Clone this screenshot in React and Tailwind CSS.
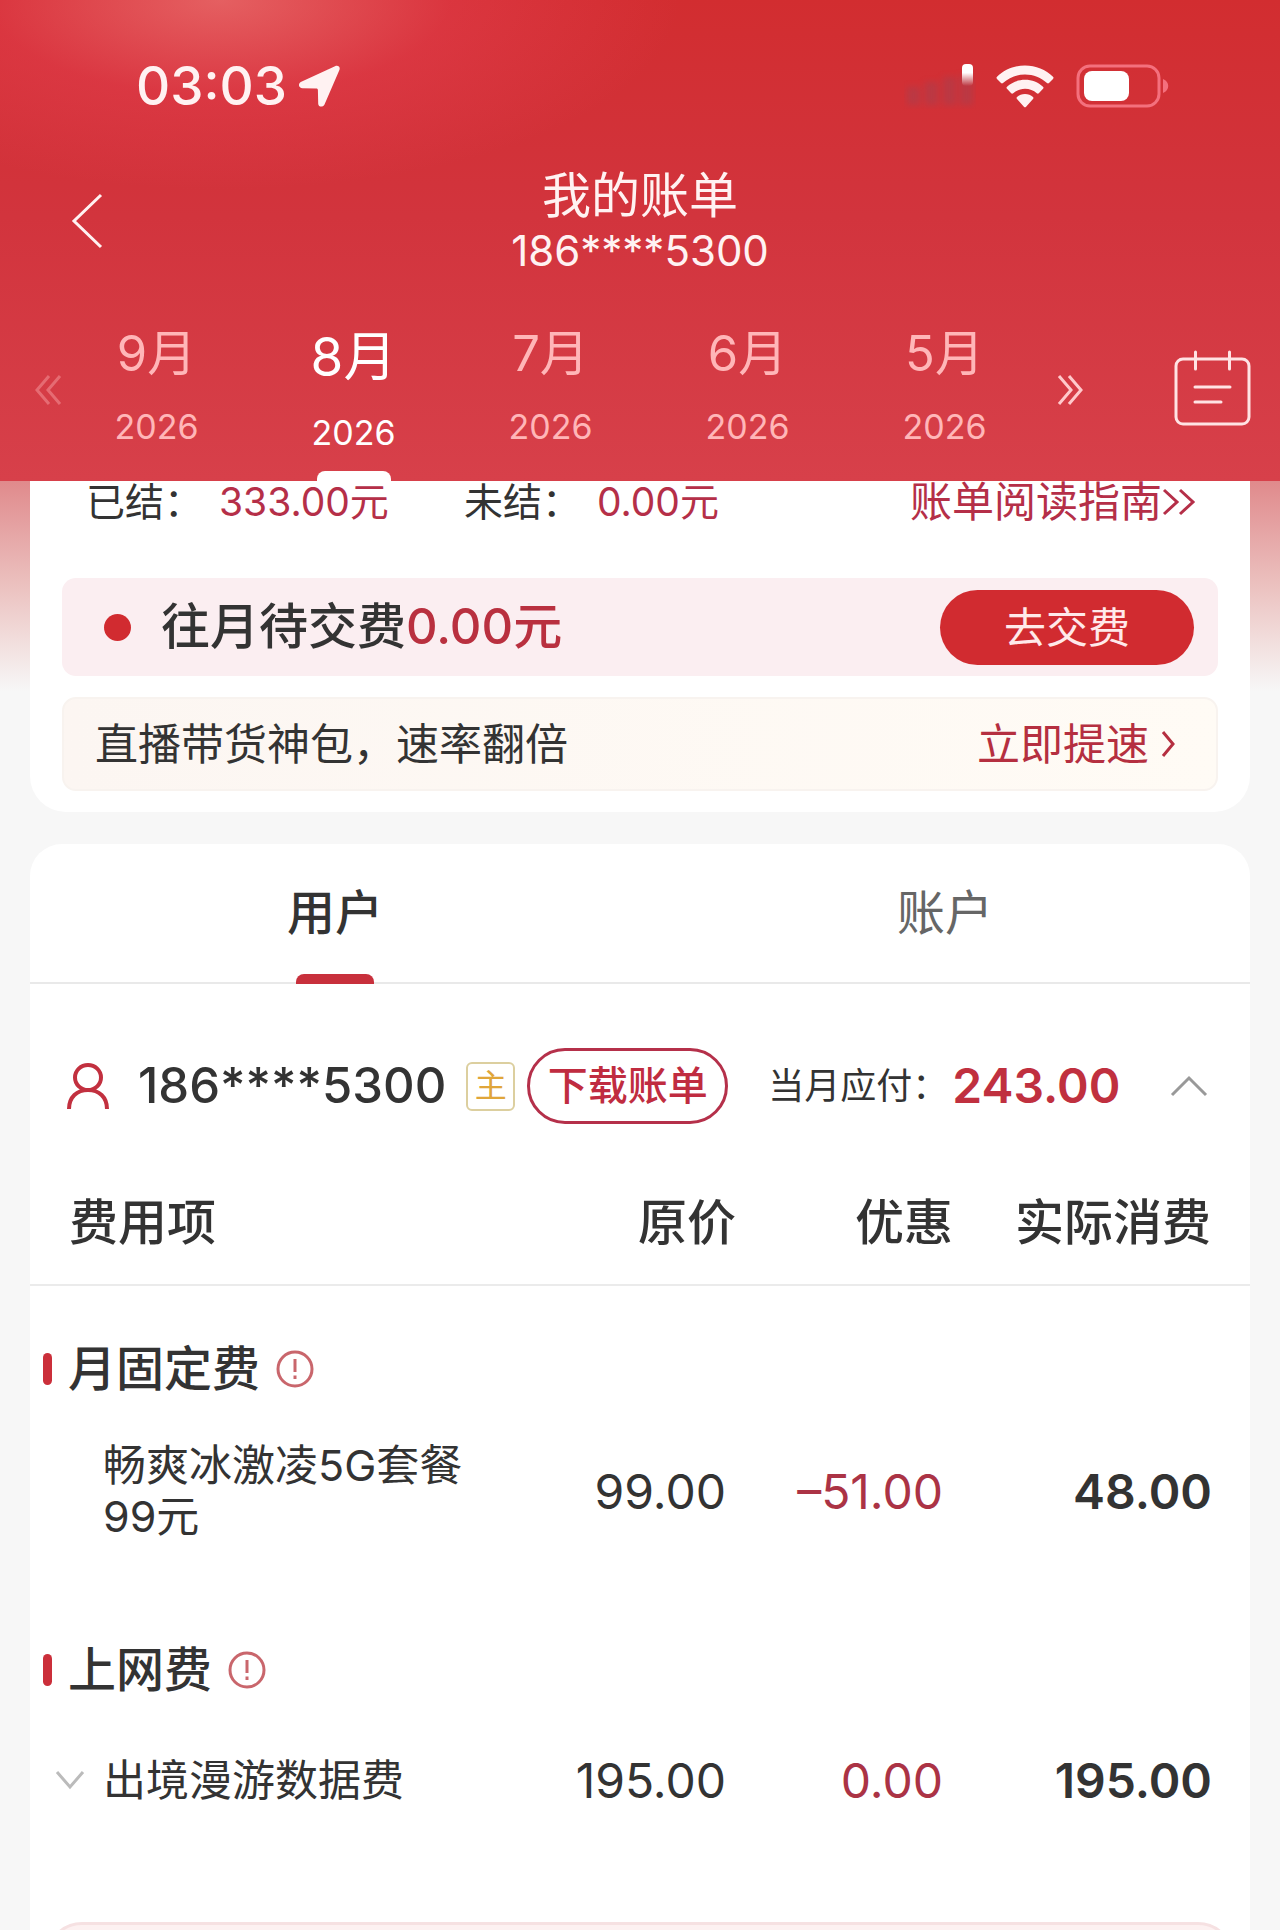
import React, { useState } from 'react'

const months = [
  { month: '9月', year: '2026' },
  { month: '8月', year: '2026' },
  { month: '7月', year: '2026' },
  { month: '6月', year: '2026' },
  { month: '5月', year: '2026' },
]

const groups = [
  {
    title: '月固定费',
    items: [{ name: '畅爽冰激凌5G套餐99元', price: '99.00', discount: '–51.00', actual: '48.00' }],
  },
  {
    title: '上网费',
    items: [{ name: '出境漫游数据费', price: '195.00', discount: '0.00', actual: '195.00', more: true }],
  },
]

function StatusBar() {
  return (
    <div className="flex items-center justify-between pt-[52px] pl-[136px] pr-[110px]">
      <div className="flex items-center gap-3">
        <span className="text-[53px] leading-[68px] font-medium">03:03</span>
        <svg className="h-[42px] w-[42px]" viewBox="0 0 42 42" fill="currentColor">
          <path d="M36 1.200c2.900-1.400 5.600.6 4.400 3.800L25.500 39.500c-1.500 3.200-6.200 2.600-6.300-.8L18.900 25c0-1-.6-1.600-1.600-1.600L3.400 23.200C-.6 23-1.300 18.300 2.300 16.700z" />
        </svg>
      </div>
      <div className="flex items-center">
        <svg className="mr-5 h-[46px] w-[72px]" viewBox="0 0 72 46">
          <defs>
            <linearGradient id="bar" x1="0" y1="0" x2="0" y2="1">
              <stop offset="0" stopColor="#fff" />
              <stop offset=".4" stopColor="#fff" />
              <stop offset="1" stopColor="#fff" stopOpacity="0" />
            </linearGradient>
            <filter id="soft" x="-20%" y="-20%" width="140%" height="140%">
              <feGaussianBlur stdDeviation="3" />
            </filter>
          </defs>
          <g fill="#a83f50" opacity=".55" filter="url(#soft)">
            <rect x="3" y="24" width="13" height="18" />
            <rect x="21" y="19" width="13" height="23" />
            <rect x="39" y="14" width="13" height="28" />
            <rect x="56" y="12" width="13" height="30" />
          </g>
          <rect x="58" y="1" width="11" height="22" rx="4" fill="url(#bar)" />
        </svg>
        <svg className="mr-[22px] h-[43px] w-[58px]" viewBox="0 0 58 43" fill="currentColor">
          <path d="M29 .5C39.800.5 49.800 4.700 57 11.800c.7.700.7 1.400 0 2.100l-4 4.200c-.6.600-1.400.6-2 0C45.200 12.600 37.500 9.400 29 9.400S12.800 12.600 7 18.100c-.6.600-1.400.6-2 0L1 13.900c-.7-.7-.7-1.400 0-2.100C8.200 4.700 18.200.5 29 .5z" />
          <path d="M29 14.800c7 0 13.300 2.600 18 7 .7.600.7 1.300 0 2l-4.200 4.400c-.6.600-1.300.6-2 0-3.200-2.800-7.300-4.500-11.800-4.500s-8.600 1.700-11.800 4.500c-.7.600-1.400.6-2 0L11 23.800c-.7-.7-.7-1.400 0-2 4.700-4.400 11-7 18-7z" />
          <path d="M29 29c3.100 0 5.900 1.200 8 3.100.6.600.6 1.200 0 1.900l-6.900 7.700c-.7.700-1.500.7-2.200 0L21 34c-.6-.7-.6-1.300 0-1.900 2.100-1.900 4.900-3.100 8-3.100z" />
        </svg>
        <svg className="h-[44px] w-[94px]" viewBox="0 0 94 44">
          <rect x="2" y="2" width="81" height="40" rx="12" fill="none" stroke="#f4707d" strokeWidth="3" />
          <rect x="8" y="7" width="45" height="30" rx="8" fill="#fff" />
          <path d="M87 15c7 3 7 11 0 14z" fill="#f4707d" />
        </svg>
      </div>
    </div>
  )
}

function TitleBar() {
  return (
    <div className="mt-[46px] grid grid-cols-[1fr_auto_1fr] items-center">
      <button aria-label="返回" className="ml-[71px] justify-self-start">
        <svg className="h-[56px] w-[32px]" viewBox="0 0 32 56" fill="none" stroke="currentColor" strokeWidth="3">
          <path d="M30 2 3 28l27 26" />
        </svg>
      </button>
      <div className="text-center">
        <h1 className="text-[49px] leading-[60px]">我的账单</h1>
        <p className="text-[42px] leading-[50px]">186****5300</p>
      </div>
    </div>
  )
}

function MonthBar() {
  const [current, setCurrent] = useState(1)
  return (
    <div className="mt-[23px] flex">
      <button aria-label="更晚月份" className="flex w-[58px] shrink-0 items-center pl-[34px] opacity-40">
        <svg className="h-[30px] w-[28px] shrink-0" viewBox="0 0 28 30" fill="none" stroke="#ffb3b6" strokeWidth="3">
          <path d="M15 1 3 15l12 14M26 1 14 15l12 14" />
        </svg>
      </button>
      <div className="flex flex-1">
        {months.map((m, index) => (
          <button
            key={m.month}
            onClick={() => setCurrent(index)}
            className={`relative flex flex-1 flex-col items-center pt-5 ${index === current ? 'pb-[18px] text-white' : 'pb-6 text-[#ffb6b8]'}`}
          >
            <span className={index === current ? 'text-[53px] leading-[76px]' : 'text-[49px] leading-[70px]'}>
              {m.month}
            </span>
            <span className="mt-2 text-[34px] leading-[60px]">{m.year}</span>
            {index === current && <span className="absolute bottom-0 h-[10px] w-[74px] rounded-t-lg bg-white" />}
          </button>
        ))}
      </div>
      <button aria-label="更早月份" className="flex w-10 shrink-0 items-center justify-end">
        <svg className="h-[30px] w-[26px]" viewBox="0 0 26 30" fill="none" stroke="#ffc9cb" strokeWidth="3">
          <path d="M2 1l12 14L2 29M12 1l12 14-12 14" />
        </svg>
      </button>
      <button aria-label="选择月份" className="mr-[29px] ml-[91px] shrink-0">
        <svg className="h-[81px] w-[77px]" viewBox="0 0 77 81" fill="none" stroke="#ffe3e4" strokeWidth="3" strokeLinecap="round">
          <rect x="2" y="9" width="73" height="65" rx="7" />
          <path d="M21.500 2v17M55.500 2v17M21 37h35M21 52h26" />
        </svg>
      </button>
    </div>
  )
}

function SummaryCard() {
  return (
    <section className="mx-[30px] rounded-b-[36px] bg-white px-8 pb-[21px]">
      <div className="flex items-center pr-[22px] pl-6 text-[39px] leading-[42px]">
        <span>已结：</span>
        <span className="ml-4 text-[#b52f48]">333.00元</span>
        <span className="ml-[75px]">未结：</span>
        <span className="ml-4 text-[#b52f48]">0.00元</span>
        <a href="#guide" className="ml-auto flex items-center text-[42px] text-[#b52f48]">
          账单阅读指南
          <svg className="h-[28px] w-[34px]" viewBox="0 0 34 28" fill="none" stroke="currentColor" strokeWidth="3">
            <path d="M2 2l13 12L2 26M18 2l13 12-13 12" />
          </svg>
        </a>
      </div>

      <div className="mt-[55px] flex h-[98px] items-center rounded-[14px] bg-[#fbeef1] pr-6 pl-[42px]">
        <span className="h-[27px] w-[27px] rounded-full bg-[#d12b30]" />
        <p className="ml-[30px] text-[49px] leading-[70px] font-medium">
          往月待交费<span className="text-[#b9303f]">0.00元</span>
        </p>
        <button className="ml-auto h-[75px] w-[254px] rounded-full bg-[#d12b30] text-[42px] text-[#ffe9ea]">去交费</button>
      </div>

      <div className="mt-[21px] flex h-[94px] items-center justify-between rounded-[14px] border-2 border-[#f8f3ef] bg-linear-to-r from-[#fcf6f2] to-[#fffbf5] pr-[40px] pl-[31px] text-[43px]">
        <p>直播带货神包，速率翻倍</p>
        <a href="#speed" className="flex items-center gap-3 text-[#b52f40]">
          立即提速
          <svg className="h-[28px] w-[15px]" viewBox="0 0 15 28" fill="none" stroke="currentColor" strokeWidth="3">
            <path d="M2 2l10 12L2 26" />
          </svg>
        </a>
      </div>
    </section>
  )
}

function Tabs({ tab, setTab }) {
  return (
    <div role="tablist" className="flex border-b-2 border-[#e9e9e9]">
      {['用户', '账户'].map((name) => (
        <button
          key={name}
          role="tab"
          aria-selected={tab === name}
          onClick={() => setTab(name)}
          className={`relative flex flex-1 justify-center py-[34px] text-[48px] leading-[70px] ${tab === name ? 'font-medium' : 'text-[#666]'}`}
        >
          {name}
          {tab === name && <span className="absolute -bottom-[2px] h-[10px] w-[78px] rounded-t-lg bg-[#c8303c]" />}
        </button>
      ))}
    </div>
  )
}

function UserRow() {
  return (
    <div className="flex items-center py-16 pr-[42px] pl-[36px]">
      <svg className="h-[46px] w-[44px] shrink-0" viewBox="0 0 44 46" fill="none" stroke="#c2303f" strokeWidth="4">
        <ellipse cx="22" cy="14.500" rx="13" ry="12.500" />
        <path d="M3 46C3 34 11 27 22 27s19 7 19 19" />
      </svg>
      <span className="ml-7 text-[49px] leading-[76px] font-medium">186****5300</span>
      <span className="ml-5 flex h-[49px] w-[49px] shrink-0 items-center justify-center rounded-md border-2 border-[#dccf9f] text-[32px] text-[#e0a63a]">
        主
      </span>
      <button className="ml-3 h-[76px] w-[201px] shrink-0 rounded-full border-3 border-[#b5304a] text-[40px] font-medium text-[#c02c40]">
        下载账单
      </button>
      <span className="ml-10 text-[36px] whitespace-nowrap">当月应付：</span>
      <span className="ml-1 text-[48px] font-semibold text-[#c0303f]">243.00</span>
      <button aria-label="收起" className="ml-auto shrink-0">
        <svg className="h-[22px] w-[38px]" viewBox="0 0 38 22" fill="none" stroke="#999" strokeWidth="3">
          <path d="M2 20 19 3l17 17" />
        </svg>
      </button>
    </div>
  )
}

function FeeGroup({ group }) {
  return (
    <tbody>
      <tr>
        <th colSpan={4} className="pt-12 pb-9 pl-[13px] text-left font-medium">
          <div className="flex items-center text-[48px] leading-[70px]">
            <span className="mr-4 h-8 w-[9px] rounded-full bg-[#cb2f3a]" />
            {group.title}
            <svg className="ml-4 h-[38px] w-[38px]" viewBox="0 0 38 38" fill="none" stroke="#c9666c" strokeWidth="3">
              <circle cx="19" cy="19" r="17" />
              <path d="M19 9v13M19 25.500v3.500" />
            </svg>
          </div>
        </th>
      </tr>
      {group.items.map((item) => (
        <tr key={item.name} className="text-right text-[48px] leading-[51px]">
          <td className="h-[123px] pb-[45px] text-left text-[43px]">
            <div className="flex items-center pl-[25px]">
              <span className="mr-[18px] w-[30px] shrink-0">
                {item.more && (
                  <svg className="h-[20px] w-[30px]" viewBox="0 0 30 20" fill="none" stroke="#bbb" strokeWidth="3">
                    <path d="M2 2l13 15L28 2" />
                  </svg>
                )}
              </span>
              <span className="max-w-[370px]">{item.name}</span>
            </div>
          </td>
          <td className="pr-[10px] pb-[45px]">{item.price}</td>
          <td className="pr-[10px] pb-[45px] text-[#ab3345]">{item.discount}</td>
          <td className="pr-[38px] pb-[45px] font-semibold">{item.actual}</td>
        </tr>
      ))}
    </tbody>
  )
}

function App() {
  const [tab, setTab] = useState('用户')

  return (
    <div className="flex h-screen flex-col overflow-hidden bg-[#f7f7f7] font-['Inter','Noto_Sans_CJK_SC',sans-serif] text-[#333]">
      <header className="shrink-0 bg-[radial-gradient(ellipse_460px_190px_at_220px_0px,rgba(255,165,165,0.42),rgba(240,75,100,0.28)_50%,transparent),linear-gradient(to_bottom,#d22d30,#d2343d_45%,#d7404a)] text-[#fff2f2]">
        <StatusBar />
        <TitleBar />
        <MonthBar />
      </header>

      <main className="min-h-0 flex-1 bg-[linear-gradient(to_bottom,#e08a8c,#ecc4c2_110px,#f7f7f7_210px)]">
        <SummaryCard />

        <section className="mx-[30px] mt-8 rounded-t-[32px] bg-white pb-10">
          <Tabs tab={tab} setTab={setTab} />
          <UserRow />
          <table className="w-full table-fixed">
            <thead>
              <tr className="border-b-2 border-[#ebebeb] text-right text-[49px] leading-[70px]">
                <th className="pb-[26px] pl-[39px] text-left font-medium">费用项</th>
                <th className="w-[217px] pb-[26px] font-medium">原价</th>
                <th className="w-[217px] pb-[26px] font-medium">优惠</th>
                <th className="w-[297px] pr-[39px] pb-[26px] font-medium">实际消费</th>
              </tr>
            </thead>
            {groups.map((group) => (
              <FeeGroup key={group.title} group={group} />
            ))}
          </table>
          <div className="mx-4 mt-[58px] h-24 rounded-[36px] border-3 border-[#f6e1e2] bg-[#fdf1f1]" />
        </section>
      </main>
    </div>
  )
}

export default App
